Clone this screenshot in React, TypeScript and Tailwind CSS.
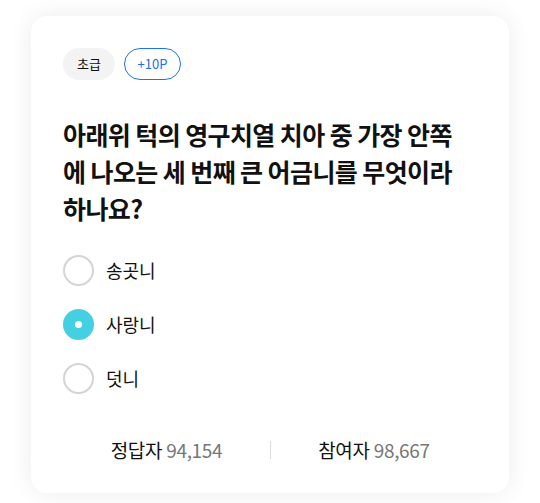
const options = [
  { label: "송곳니", selected: false },
  { label: "사랑니", selected: true },
  { label: "덧니", selected: false },
];

const stats = [
  { label: "정답자", value: "94,154" },
  { label: "참여자", value: "98,667" },
];

const questionLines = [
  "아래위 턱의 영구치열 치아 중 가장 안쪽",
  "에 나오는 세 번째 큰 어금니를 무엇이라",
  "하나요?",
];

export default function App() {
  return (
    <div
      className="min-h-[503px] w-[540px] bg-white px-[31px] pt-4 text-[#111]"
      style={{ fontFamily: '"Noto Sans CJK KR", "Noto Sans", sans-serif' }}
    >
      <div className="h-[477px] w-[478px] rounded-2xl bg-white px-8 pt-8 shadow-[0_0_24px_rgba(0,0,0,0.08)]">
        <div className="flex gap-[9px]">
          <span className="flex h-8 w-[52px] items-center justify-center rounded-full bg-[#f3f3f3] text-[13px]">
            초급
          </span>
          <span className="flex h-8 w-[57px] items-center justify-center rounded-full border border-[#1a73f0] text-[13px] text-[#1a6ef0]">
            +10P
          </span>
        </div>

        <h1 className="mt-[36px] text-[25px] font-bold leading-[37px] tracking-[-0.6px]">
          {questionLines.map((line) => (
            <span key={line} className="block whitespace-nowrap">
              {line}
            </span>
          ))}
        </h1>

        <div className="mt-[28px] flex flex-col gap-[23px]">
          {options.map((o) => (
            <label key={o.label} className="flex items-center gap-3">
              {o.selected ? (
                <span className="flex h-[31px] w-[31px] items-center justify-center rounded-full bg-[#42d0e2]">
                  <span className="h-[7px] w-[7px] rounded-full bg-white" />
                </span>
              ) : (
                <span className="h-[31px] w-[31px] rounded-full border-2 border-[#d4d4d4]" />
              )}
              <span className="text-[18px]">{o.label}</span>
            </label>
          ))}
        </div>

        <div className="mt-[42px] flex items-center">
          {stats.map((s, i) => (
            <div key={s.label} className="flex flex-1 items-center">
              {i > 0 ? <span className="h-[18px] w-px bg-[#ddd]" /> : null}
              <p className="flex-1 text-center text-[19px] leading-[28px] tracking-[-0.3px]">
                {s.label} <span className="text-[#777]">{s.value}</span>
              </p>
            </div>
          ))}
        </div>
      </div>
    </div>
  );
}
